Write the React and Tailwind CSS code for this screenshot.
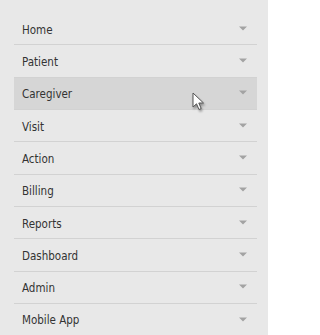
import React from 'react'

const items = ['Home', 'Patient', 'Caregiver', 'Visit', 'Action', 'Billing', 'Reports', 'Dashboard', 'Admin', 'Mobile App']

const Caret = () => (
  <svg width="8" height="5" viewBox="0 0 8 5" className="mr-[10px] shrink-0 relative top-[-0.5px]">
    <path d="M0 0.5 L8 0.5 L4 4.5 Z" fill="#a3a3a3" />
  </svg>
)

const Cursor = () => (
  <svg width="14" height="20" viewBox="0 0 14 20" className="absolute left-[178px] top-[14px] drop-shadow-[1px_2px_1px_rgba(0,0,0,0.35)]">
    <path d="M1 1 L1 15 L4.5 11.8 L7 17.5 L9.2 16.5 L6.8 11 L11.5 11 Z" fill="#ffffff" stroke="#555" strokeWidth="1" strokeLinejoin="round" />
  </svg>
)

export default function App() {
  return (
    <div className="w-[268px] h-[335px] bg-[#e8e8e8] pt-[13px] pl-[14px] pr-[11px] overflow-hidden font-['DejaVu_Sans_Condensed','DejaVu_Sans',sans-serif]">
      <ul>
        {items.map((label, i) => (
          <li
            key={label}
            className={
              'relative flex items-center justify-between h-[32.33px] border-b border-[#d2d2d2] pl-[8px] text-[11.5px] text-[#333] ' +
              (i === 2 ? 'bg-[#d6d6d6]' : '')
            }
          >
            <span className="relative top-[1.5px]">{label}</span>
            <Caret />
            {i === 2 && <Cursor />}
          </li>
        ))}
      </ul>
    </div>
  )
}
